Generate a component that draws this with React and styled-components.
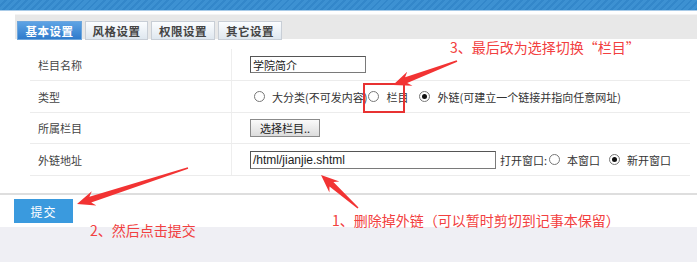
import React from "react";
import styled, { createGlobalStyle, css } from "styled-components";

const Global = createGlobalStyle`
  html, body { margin: 0; padding: 0; background: #fff; }
  body { font-family: "Noto Sans CJK SC", "Liberation Sans", sans-serif; overflow: hidden; }
`;

const Page = styled.div`
  position: relative;
  width: 697px;
  height: 262px;
  display: flex;
  flex-direction: column;
  background: #fff;
  overflow: hidden;
`;

const TopBand = styled.div`
  height: 10px;
  background: repeating-linear-gradient(135deg, #3d91d2 0 3px, #3387ca 3px 5px);
  border-bottom: 1px solid #a9cbe8;
  margin-bottom: 3px;
`;

const TabBar = styled.div`
  margin-left: 15px;
  height: 24px;
  background: #e8e8e8;
  border-top: 1px solid #f4f4f4;
  display: flex;
  align-items: flex-end;
  gap: 3px;
  padding-left: 2px;
`;

const Tab = styled.div`
  width: ${(p) => p.$w}px;
  height: 19px;
  margin-bottom: -1px;
  box-sizing: border-box;
  display: flex;
  align-items: center;
  justify-content: center;
  font-size: 11.5px;
  font-weight: bold;
  letter-spacing: 0.5px;
  ${(p) =>
    p.$active
      ? css`
          background: linear-gradient(#5ea3e4, #2f7bcc);
          border: 1px solid #6ea6dc;
          color: #fff;
        `
      : css`
          background: linear-gradient(#fbfdff, #dfe7ef);
          border: 1px solid #c8ced6;
          color: #444;
        `}
`;

const FormTable = styled.div`
  margin: 10px 7px 15px 30px;
  display: flex;
  flex-direction: column;
  border-bottom: 2px solid #fff;
`;

const Row = styled.div`
  display: grid;
  grid-template-columns: 202px 1fr;
  height: ${(p) => p.$h || 32}px;
  border-bottom: 1px solid #ececec;
  box-sizing: border-box;
`;

const Label = styled.div`
  border-right: 1px solid #eeeeee;
  padding-left: 8px;
  display: flex;
  align-items: center;
  font-size: 11px;
  color: #444;
`;

const Value = styled.div`
  padding-left: ${(p) => p.$pl ?? 18}px;
  display: flex;
  align-items: center;
  font-size: 11px;
  color: #333;
`;

const TextBox = styled.div`
  width: ${(p) => p.$w}px;
  height: ${(p) => p.$h}px;
  box-sizing: border-box;
  border: 1px solid #7a7a7a;
  border-top-color: #555;
  border-left-color: #555;
  display: flex;
  align-items: center;
  padding-left: 2px;
  font-size: ${(p) => (p.$latin ? 12 : 11)}px;
  font-family: ${(p) =>
    p.$latin ? `"Liberation Sans", Arial, sans-serif` : `"Noto Sans CJK SC", sans-serif`};
  color: #222;
  background: #fff;
`;

const GrayButton = styled.div`
  width: 70px;
  height: 18px;
  box-sizing: border-box;
  border: 1px solid #8a8a8a;
  background: linear-gradient(#fafafa, #dcdcdc);
  display: flex;
  align-items: center;
  justify-content: center;
  font-size: 11px;
  color: #222;
`;

const Radio = styled.span`
  width: 11px;
  height: 11px;
  box-sizing: border-box;
  border-radius: 50%;
  border: 1px solid #777;
  background: #fff;
  margin: 0 7px 0 ${(p) => p.$ml ?? 3}px;
  display: inline-flex;
  align-items: center;
  justify-content: center;
  flex: none;
  &::after {
    content: "";
    display: ${(p) => (p.$checked ? "block" : "none")};
    width: 5px;
    height: 5px;
    border-radius: 50%;
    background: #111;
  }
`;

const Text = styled.span`
  white-space: nowrap;
  margin-right: ${(p) => p.$mr ?? 0}px;
  margin-left: ${(p) => p.$ml ?? 0}px;
`;

const Footer = styled.div`
  border-top: 2px solid #dedede;
  padding: 4px 0 4px 14px;
`;

const SubmitButton = styled.div`
  width: 59px;
  height: 24px;
  background: #3a9ade;
  color: #fff;
  font-size: 12px;
  display: flex;
  align-items: center;
  justify-content: center;
  letter-spacing: 1px;
`;

const BottomFill = styled.div`
  flex: 1;
  background: #efeff4;
`;

const Note = styled.div`
  position: absolute;
  left: ${(p) => p.$x}px;
  top: ${(p) => p.$y}px;
  font-size: 14px;
  line-height: 18px;
  color: #f24040;
  white-space: nowrap;
`;

const Highlight = styled.div`
  position: absolute;
  left: 363px;
  top: 83px;
  width: 42px;
  height: 30px;
  box-sizing: border-box;
  border: 2px solid #e83232;
`;

const ArrowLayer = styled.svg`
  position: absolute;
  left: 0;
  top: 0;
  pointer-events: none;
`;

function arrowPoints(x1, y1, x2, y2, headLen = 18, headW = 7.5, w0 = 0.8, w1 = 3) {
  const dx = x2 - x1;
  const dy = y2 - y1;
  const L = Math.hypot(dx, dy);
  const ux = dx / L;
  const uy = dy / L;
  const nx = -uy;
  const ny = ux;
  const bx = x2 - ux * headLen;
  const by = y2 - uy * headLen;
  const nb = x2 - ux * (headLen - 4);
  const nby = y2 - uy * (headLen - 4);
  const pts = [
    [x1 + nx * w0, y1 + ny * w0],
    [nb + nx * w1, nby + ny * w1],
    [bx + nx * headW, by + ny * headW],
    [x2, y2],
    [bx - nx * headW, by - ny * headW],
    [nb - nx * w1, nby - ny * w1],
    [x1 - nx * w0, y1 - ny * w0],
  ];
  return pts.map((p) => p.map((v) => v.toFixed(1)).join(",")).join(" ");
}

const arrows = [
  [457, 61, 393, 85],
  [188, 168, 77, 204],
  [358, 208, 321, 175],
];

export default function App() {
  return (
    <>
      <Global />
      <Page>
        <TopBand />
        <TabBar>
          <Tab $active $w={65}>基本设置</Tab>
          <Tab $w={63}>风格设置</Tab>
          <Tab $w={64}>权限设置</Tab>
          <Tab $w={64}>其它设置</Tab>
        </TabBar>
        <FormTable>
          <Row>
            <Label>栏目名称</Label>
            <Value>
              <TextBox $w={116} $h={17}>学院简介</TextBox>
            </Value>
          </Row>
          <Row>
            <Label>类型</Label>
            <Value $pl={18}>
              <Radio $ml={4} />
              <Text $mr={1}>大分类(不可发内容)</Text>
              <Radio $ml={0} />
              <Text $mr={9}>栏目</Text>
              <Radio $ml={2} $checked />
              <Text>外链(可建立一个链接并指向任意网址)</Text>
            </Value>
          </Row>
          <Row $h={31}>
            <Label>所属栏目</Label>
            <Value>
              <GrayButton>选择栏目..</GrayButton>
            </Value>
          </Row>
          <Row>
            <Label>外链地址</Label>
            <Value>
              <TextBox $w={246} $h={18} $latin>/html/jianjie.shtml</TextBox>
              <Text $ml={4}>打开窗口:</Text>
              <Radio $ml={2} />
              <Text $mr={9}>本窗口</Text>
              <Radio $ml={0} $checked />
              <Text>新开窗口</Text>
            </Value>
          </Row>
        </FormTable>
        <Footer>
          <SubmitButton>提交</SubmitButton>
        </Footer>
        <BottomFill />

        <Highlight />
        <Note $x={450} $y={38}>3、最后改为选择切换“栏目”</Note>
        <Note $x={332} $y={211}>1、删除掉外链（可以暂时剪切到记事本保留）</Note>
        <Note $x={90} $y={221}>2、然后点击提交</Note>
        <ArrowLayer width="697" height="262" viewBox="0 0 697 262">
          {arrows.map((a, i) => (
            <polygon key={i} points={arrowPoints(...a)} fill="#f23333" />
          ))}
        </ArrowLayer>
      </Page>
    </>
  );
}
